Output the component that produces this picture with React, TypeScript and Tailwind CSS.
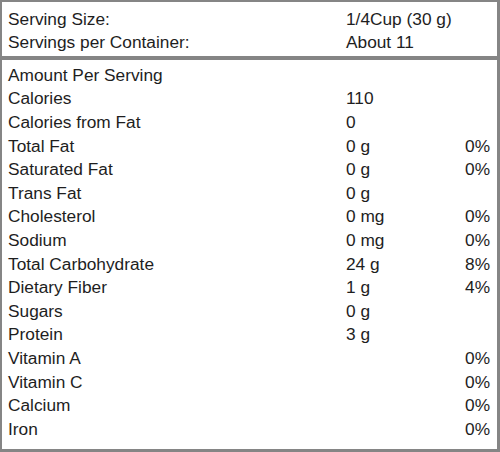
import React from "react";

const rows: [string, string, string][] = [
  ["Amount Per Serving", "", ""],
  ["Calories", "110", ""],
  ["Calories from Fat", "0", ""],
  ["Total Fat", "0 g", "0%"],
  ["Saturated Fat", "0 g", "0%"],
  ["Trans Fat", "0 g", ""],
  ["Cholesterol", "0 mg", "0%"],
  ["Sodium", "0 mg", "0%"],
  ["Total Carbohydrate", "24 g", "8%"],
  ["Dietary Fiber", "1 g", "4%"],
  ["Sugars", "0 g", ""],
  ["Protein", "3 g", ""],
  ["Vitamin A", "", "0%"],
  ["Vitamin C", "", "0%"],
  ["Calcium", "", "0%"],
  ["Iron", "", "0%"],
];

export default function App() {
  return (
    <div
      className="w-[500px] h-[452px] bg-[#858585] pt-[2px] pl-[2px] pr-[3px] pb-[3px] flex flex-col gap-[4px] text-[17.3px] text-[#1e1e1e]"
      style={{ fontFamily: '"Liberation Sans", Arial, sans-serif' }}
    >
      <div className="bg-white pt-[6px] pb-[2px] pl-[6px]">
        <div className="flex h-[23px] items-center">
          <span className="w-[338px]">Serving Size:</span>
          <span>1/4Cup (30 g)</span>
        </div>
        <div className="flex h-[23px] items-center">
          <span className="w-[338px]">Servings per Container:</span>
          <span>About 11</span>
        </div>
      </div>
      <div className="bg-white flex-1 pt-[4px] pl-[6px] pr-[7px]">
        {rows.map(([a, b, c], i) => (
          <div key={i} className="flex h-[23.6px] items-center">
            <span className="w-[338px]">{a}</span>
            <span className="flex-1">{b}</span>
            <span className="text-right">{c}</span>
          </div>
        ))}
      </div>
    </div>
  );
}
